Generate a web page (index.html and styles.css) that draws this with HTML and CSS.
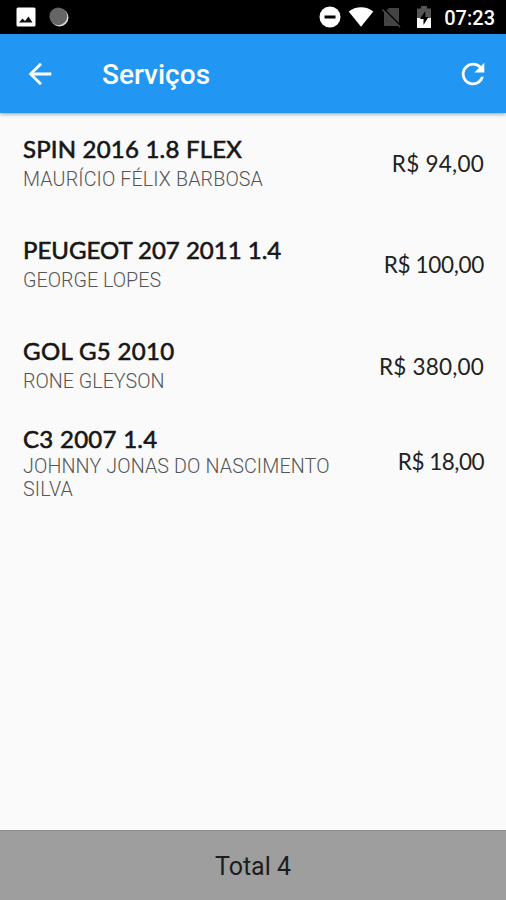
FILE: index.html
```html
<!DOCTYPE html>
<html lang="pt-BR">
<head>
<meta charset="utf-8">
<title>Serviços</title>
<link rel="stylesheet" href="styles.css">
</head>
<body>
<div class="status">
  <svg class="picture" width="20" height="20" viewBox="0 0 20 20"><rect x=".5" y=".5" width="19" height="19" rx="1.500" fill="#fff"/><path d="M3 15.500 6.500 11.500 9 14 12.500 9.500 16.500 15.500Z" fill="#111"/></svg>
  <svg class="moon" width="20" height="20" viewBox="0 0 20 20"><circle cx="10.500" cy="10.500" r="9" fill="#ddd"/><circle cx="9.300" cy="9.300" r="8.900" fill="#656565"/></svg>
  <svg class="dnd" width="22" height="22" viewBox="0 0 22 22"><circle cx="11" cy="11" r="10.500" fill="#fff"/><path d="M5.500 9.500h11v3h-11z" fill="#000"/></svg>
  <svg class="wifi" width="26" height="22" viewBox="0 0 26 22"><path d="M.7 5.500C7.500-.3 18.500-.3 25.300 5.500L13 20.700Z" fill="#fff"/></svg>
  <svg class="sim" width="20" height="22" viewBox="0 0 20 22"><path d="M7 2h10v16.500L4.500 6V4.500ZM2 5l15 15H2Z" fill="#444"/><path d="M1.500 2.500 19 20" stroke="#000" stroke-width="1.500"/><path d="M.5 3.500 18 21" stroke="#484848" stroke-width="1.600"/></svg>
  <svg class="battery" width="14" height="22" viewBox="0 0 14 22"><path d="M4 0h6v2.500h4V12H0V2.500h4Z" fill="#555"/><path d="M0 12h14v10H0Z" fill="#fff"/><path d="M8.300 5 3 13h3.500v6L11.500 11H8.300Z" fill="#000"/></svg>
  <span class="clock">07:23</span>
</div>
<header>
  <svg class="back" width="34" height="34" viewBox="0 0 24 24"><path d="M20 11H7.830l5.590-5.590L12 4l-8 8 8 8 1.410-1.410L7.830 13H20z" fill="#fff"/></svg>
  <h1>Serviços</h1>
  <svg class="refresh" width="34" height="34" viewBox="0 0 24 24"><path d="M17.650 6.350A7.960 7.960 0 0 0 12 4a8 8 0 1 0 7.730 10h-2.080A6 6 0 1 1 12 6c1.660 0 3.140.690 4.220 1.780L13 11h7V4z" fill="#fff"/></svg>
</header>
<main>
  <article class="row"><div class="info"><h2 class="t1">SPIN 2016 1.8 FLEX</h2><p class="s1">MAURÍCIO FÉLIX BARBOSA</p></div><span class="price p1">R$ 94,00</span></article>
  <article class="row"><div class="info"><h2 class="t2">PEUGEOT 207 2011 1.4</h2><p class="s2">GEORGE LOPES</p></div><span class="price p2">R$ 100,00</span></article>
  <article class="row"><div class="info"><h2 class="t3">GOL G5 2010</h2><p class="s3">RONE GLEYSON</p></div><span class="price p3">R$ 380,00</span></article>
  <article class="row tall"><div class="info"><h2 class="t4">C3 2007 1.4</h2><p class="s4">JOHNNY JONAS DO NASCIMENTO<br>SILVA</p></div><span class="price p4">R$ 18,00</span></article>
</main>
<footer><span>Total 4</span></footer>
</body>
</html>
```
FILE: styles.css
```css
* { box-sizing: border-box; }
body { margin: 0; height: 900px; display: flex; flex-direction: column; overflow: hidden; background: #fafafa; font-family: Roboto, sans-serif; }
h1, h2, p { margin: 0; }
svg { display: block; flex: none; }
.status { height: 34px; flex: none; display: flex; align-items: center; padding: 0 11px 0 16px; background: #000; }
.moon { margin-left: 13px; }
.dnd { margin-left: auto; }
.wifi { margin-left: 7px; }
.sim { margin-left: 8px; }
.battery { margin-left: 15px; }
.clock { margin-left: 13px; color: #fff; font-size: 20px; font-weight: 500; line-height: 34px; white-space: nowrap; padding-top: 2px; }
header { height: 79px; flex: none; display: flex; align-items: center; padding: 0 16px 0 23px; background: #2196f3; box-shadow: 0 1px 4px rgba(0,0,0,.4); z-index: 1; }
h1 { margin-left: 45px; color: #fff; font-size: 28px; font-weight: 500; line-height: 34px; padding-top: 2px; }
.refresh { margin-left: auto; }
main { flex: 1; }
.row { height: 101.25px; display: flex; align-items: center; justify-content: space-between; padding: 0 22px 0 23px; }
.row.tall { height: 91px; }
.info { white-space: nowrap; padding-top: 1.500px; }
.tall .info { padding-top: 0; }
h2 { font-family: Lato, sans-serif; font-weight: 400; font-size: 24px; line-height: 30px; color: #161616; -webkit-text-stroke: .6px #161616; }
.t1 { letter-spacing: .2px; }
.t2 { letter-spacing: 0; }
.t3 { letter-spacing: .35px; }
.t4 { letter-spacing: .28px; }
p { font-size: 19.7px; line-height: 31px; font-weight: 300; color: #555; }
.s1, .s4 { letter-spacing: .12px; }
.tall h2 { line-height: 32px; }
.tall p { line-height: 23px; }
.price { font-family: Lato, sans-serif; font-size: 22.500px; line-height: 30px; color: #222; white-space: nowrap; padding-top: 1px; }
.tall .price { padding-top: 0; }
.p1 { letter-spacing: .25px; }
.p2 { letter-spacing: -.33px; }
.p3 { letter-spacing: .2px; }
.p4 { letter-spacing: -.5px; }
footer { height: 70px; flex: none; display: flex; align-items: center; justify-content: center; background: #9e9e9e; border-top: 1px solid #8d8d8d; font-size: 25px; color: #1c1c1c; padding-top: 2px; }
```
